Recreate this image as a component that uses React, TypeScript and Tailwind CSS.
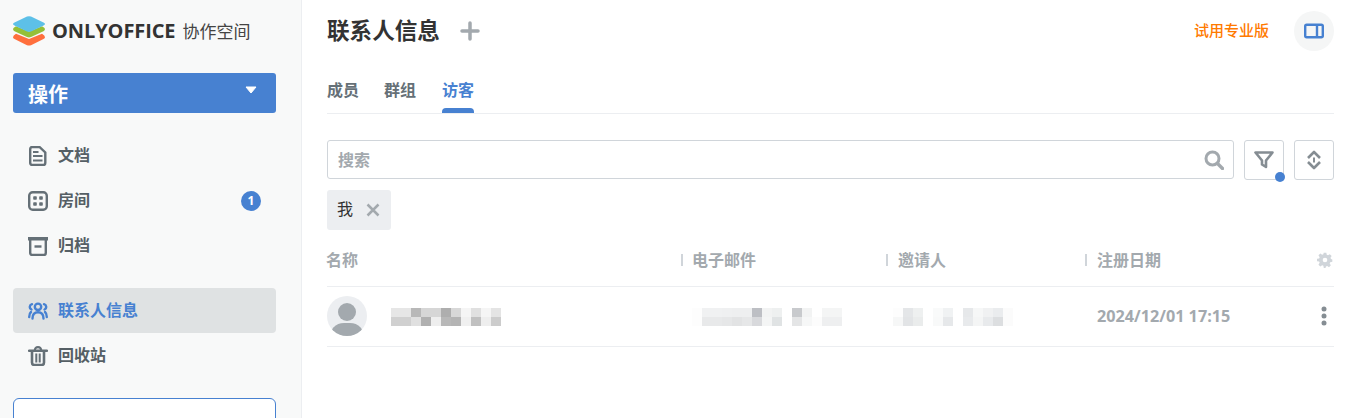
import React from 'react';

const CJK = { fontFamily: '"Open Sans", "Noto Sans CJK SC", sans-serif' };

const blurName = [
  ['#e6e6e6', '#e6e6e6', '#b8b8b8', '#d6d6d6', '#d6d6d6', '#aeaeae', '#d8d8d8', '#f5f5f5', '#e0e0e0', '#f5f5f5', '#e4e4e4'],
  ['#d0d0d0', '#d0d0d0', '#e0e0e0', '#b0b0b0', '#eeeeee', '#b8b8b8', '#b4b4b4', '#f0f0f0', '#c0c0c0', '#eeeeee', '#cccccc'],
];
const blurEmail = [
  ['#fdfdfd', '#f0f1f2', '#f0f1f2', '#eff0f1', '#eeeff0', '#eeeff0', '#bdbfc4', '#f2f3f3', '#eef0f0', '#ffffff', '#c8cacd', '#f2f3f3', '#ffffff', '#f4f5f5', '#f4f5f5'],
  ['#fdfdfd', '#e8e9ea', '#e8e9ea', '#e6e7e8', '#e2e3e4', '#e6e7e8', '#d8d9dc', '#f4f5f5', '#e0e3e4', '#ffffff', '#e4e5e6', '#f6f7f7', '#fcfcfc', '#eeeff0', '#eeeff0'],
];
const blurInviter = [
  ['#fdfdfd', '#e4e6e8', '#eef0f0', '#ffffff', '#f9fafa', '#f0f2f3', '#ffffff', '#e6e8ea', '#f6f7f7', '#f0f1f2', '#eaecee', '#fbfbfb'],
  ['#f6f7f7', '#e2e4e6', '#eaecec', '#ffffff', '#f8f9f9', '#e6e8ea', '#ffffff', '#e8eaec', '#f4f5f5', '#e8eaec', '#dcdee0', '#fbfbfb'],
];

const Blur: React.FC<{ rows: string[][] }> = ({ rows }) => (
  <div className="flex flex-col">
    {rows.map((row, i) => (
      <div key={i} className="flex h-[9px]">
        {row.map((c, j) => (
          <div key={j} className="w-[10px] h-[9px]" style={{ backgroundColor: c }} />
        ))}
      </div>
    ))}
  </div>
);

const Logo = () => (
  <svg width="32" height="30" viewBox="0 0 32 30" className="shrink-0">
    <path d="M16 21.500 L3 16.200 Q0 17.800 0 19.600 Q0 20.800 1.500 21.500 L14 27.600 Q16 28.400 18 27.600 L30.500 21.500 Q32 20.800 32 19.600 Q32 17.800 29 16.200 Z" fill="#ff6f3d" transform="translate(0 1.600)" />
    <path d="M16 15.500 L3 10.200 Q0 11.800 0 13 Q0 14.500 1.500 15.200 L14 21 Q16 21.900 18 21 L30.500 15.200 Q32 14.500 32 13 Q32 11.800 29 10.200 Z" fill="#95c038" />
    <path d="M14 .6 Q16 -.2 18 .6 L30.500 6.400 Q32 7.200 32 8 Q32 8.800 30.500 9.600 L18 15.400 Q16 16.200 14 15.400 L1.500 9.600 Q0 8.800 0 8 Q0 7.200 1.500 6.400 Z" fill="#5dc0e8" />
  </svg>
);

const DocIcon = () => (
  <svg width="20" height="20" viewBox="0 0 20 20" fill="none" stroke="#657077">
    <path d="M2.200 3a2 2 0 0 1 2-2h7.300l5.800 5.500V17a2 2 0 0 1-2 2H4.200a2 2 0 0 1-2-2Z" strokeWidth="2.400" />
    <path d="M5 6h5.500M5 10h9.500M5 14.500h9.500" strokeWidth="2.200" />
  </svg>
);

const RoomIcon = () => (
  <svg width="20" height="20" viewBox="0 0 20 20" fill="none">
    <rect x="1.200" y="1.200" width="17.600" height="17.600" rx="3.500" stroke="#657077" strokeWidth="2.400" />
    <rect x="5.200" y="5.200" width="3.600" height="3.600" rx=".8" fill="#657077" />
    <rect x="11.200" y="5.200" width="3.600" height="3.600" rx=".8" fill="#657077" />
    <rect x="5.200" y="11.200" width="3.600" height="3.600" rx=".8" fill="#657077" />
    <rect x="11.200" y="11.200" width="3.600" height="3.600" rx=".8" fill="#657077" />
  </svg>
);

const ArchiveIcon = () => (
  <svg width="20" height="20" viewBox="0 0 20 20" fill="none">
    <path d="M0 1h20v3.500H0Z" fill="#657077" />
    <path d="M2.200 4v13a2 2 0 0 0 2 2h11.600a2 2 0 0 0 2-2V4" stroke="#657077" strokeWidth="2.400" />
    <path d="M6.500 10.500h7" stroke="#657077" strokeWidth="2.400" />
  </svg>
);

const PeopleIcon = () => (
  <svg width="20" height="20" viewBox="0 0 20 20" fill="none" stroke="#4781d1" strokeWidth="2.400">
    <circle cx="10" cy="5.800" r="3.200" />
    <path d="M4.500 17.500c0-4 1.800-6.300 5.500-6.300s5.500 2.300 5.500 6.300" strokeLinecap="round" />
    <path d="M4 3.200A2.800 2.800 0 0 0 3.500 8.500M16 3.200A2.800 2.800 0 0 1 16.500 8.500M1.200 16c0-2.200.4-3.800 1.800-5M18.800 16c0-2.200-.4-3.800-1.800-5" strokeLinecap="round" />
  </svg>
);

const TrashIcon = () => (
  <svg width="20" height="20" viewBox="0 0 20 20" fill="none" stroke="#657077">
    <path d="M1 4.800h18" strokeWidth="2.400" strokeLinecap="round" />
    <path d="M6.800 4.500C6.800 2.300 8 1.200 10 1.200s3.200 1.100 3.200 3.300" strokeWidth="2.200" />
    <path d="M4 5v11.500A2.500 2.500 0 0 0 6.500 19h7a2.500 2.500 0 0 0 2.500-2.500V5" strokeWidth="2.600" />
    <path d="M8.300 7.500v9M11.700 7.500v9" strokeWidth="2" />
  </svg>
);

const NavItem: React.FC<{ icon: React.ReactNode; label: string; active?: boolean; badge?: string }> = ({ icon, label, active, badge }) => (
  <div className={`flex items-center h-[45px] px-[15px] rounded-[4px] ${active ? 'bg-[#dfe2e3]' : ''}`}>
    <div className="w-[20px] h-[20px] mr-[10px] shrink-0">{icon}</div>
    <span className={`text-[16px] font-semibold pb-[2px] ${active ? 'text-[#4781d1]' : 'text-[#555f65]'}`}>{label}</span>
    {badge && (
      <div className="ml-auto w-[20px] h-[20px] rounded-full bg-[#4781d1] text-white text-[12px] font-bold flex items-center justify-center">{badge}</div>
    )}
  </div>
);

const HeaderCell: React.FC<{ label: string; gap?: string }> = ({ label, gap = 'mr-[10px]' }) => (
  <div className="flex items-center pt-[3px]">
    <div className={`w-[2px] h-[12px] bg-[#d0d5da] ${gap}`} />
    <span>{label}</span>
  </div>
);

export default function App() {
  return (
    <div className="flex w-[1354px] h-[418px] overflow-hidden bg-white" style={CJK}>
      <aside className="w-[302px] shrink-0 h-full bg-[#f8f9f9] border-r border-[#eceef1] pl-[13px] pr-[25px] overflow-hidden">
        <div className="flex items-center h-[73px] pb-[11px]">
          <Logo />
          <span className="ml-[7px] text-[20px] leading-none font-bold text-[#333333] tracking-[-0.1px]">ONLYOFFICE</span>
          <span className="ml-[7px] text-[17px] leading-none text-[#444444]">协作空间</span>
        </div>
        <div className="flex items-center h-[40px] bg-[#4781d1] rounded-[3px] pl-[15px] pr-[19px]">
          <span className="text-[20px] font-bold text-white pt-[3px]">操作</span>
          <svg width="12" height="8" viewBox="0 0 12 8" className="ml-auto mb-[6px]">
            <path d="M1 1h10L6 7Z" fill="#ffffff" stroke="#ffffff" strokeLinejoin="round" />
          </svg>
        </div>
        <div className="mt-[20px]">
          <NavItem icon={<DocIcon />} label="文档" />
          <NavItem icon={<RoomIcon />} label="房间" badge="1" />
          <NavItem icon={<ArchiveIcon />} label="归档" />
        </div>
        <div className="mt-[20px]">
          <NavItem icon={<PeopleIcon />} label="联系人信息" active />
          <NavItem icon={<TrashIcon />} label="回收站" />
        </div>
        <div className="mt-[20px] h-[60px] bg-white border border-[#4781d1] rounded-[6px]" />
      </aside>

      <main className="flex-1 min-w-0 pl-[25px] pr-[20px]">
        <div className="flex items-center h-[61px]">
          <h1 className="text-[22.6px] font-bold text-[#333333]">联系人信息</h1>
          <svg width="20" height="20" viewBox="0 0 20 20" className="ml-[20px]">
            <path d="M10 2v16M2 10h16" stroke="#a3a9ae" strokeWidth="3.500" strokeLinecap="round" />
          </svg>
          <span className="ml-auto text-[15px] font-medium text-[#ff7a00]">试用专业版</span>
          <div className="ml-[25px] w-[40px] h-[40px] rounded-full bg-[#f5f6f6] flex items-center justify-center">
            <svg width="20" height="16" viewBox="0 0 20 16" fill="none">
              <rect x="1.200" y="1.700" width="17.600" height="12.600" rx="1.500" stroke="#4781d1" strokeWidth="2.400" />
              <path d="M13 2v12" stroke="#4781d1" strokeWidth="2.400" />
            </svg>
          </div>
        </div>

        <div className="flex gap-[25px] h-[53px] border-b border-[#eceef1] text-[16px] font-semibold text-[#657077]">
          <div className="pt-[17px]">成员</div>
          <div className="pt-[17px]">群组</div>
          <div className="relative pt-[17px] ml-[1px] text-[#4781d1]">
            访客
            <div className="absolute left-0 right-0 bottom-0 h-[5px] bg-[#4781d1] rounded-t-[4px]" />
          </div>
        </div>

        <div className="flex items-start gap-[10px] mt-[26px]">
          <div className="flex-1 h-[39px] flex items-center border border-[#d0d5da] rounded-[3px] pl-[10px] pr-[9px]">
            <span className="text-[16px] font-bold text-[#a3a9ae]">搜索</span>
            <svg width="20" height="20" viewBox="0 0 20 20" fill="none" stroke="#a3a9ae" className="ml-auto">
              <circle cx="8.500" cy="8.500" r="6.500" strokeWidth="3" />
              <path d="M13.500 13.500L18.500 18.500" strokeWidth="3.400" strokeLinecap="round" />
            </svg>
          </div>
          <div className="relative w-[40px] h-[40px] border border-[#d0d5da] rounded-[3px] flex items-center justify-center">
            <svg width="20" height="18" viewBox="0 0 20 18" fill="none">
              <path d="M1.500 1.500h17L12 9.500v6.500L8 13.500v-4Z" stroke="#858d93" strokeWidth="2.600" strokeLinejoin="round" />
            </svg>
            <div className="absolute right-[-2px] bottom-[-3px] w-[10px] h-[10px] rounded-full bg-[#4781d1]" />
          </div>
          <div className="w-[40px] h-[40px] border border-[#d0d5da] rounded-[3px] flex items-center justify-center">
            <svg width="16" height="20" viewBox="0 0 16 20" fill="none" stroke="#858d93" strokeWidth="2.600" strokeLinejoin="round">
              <path d="M2 8L8 2l6 6" />
              <path d="M2 12l6 6 6-6" />
              <path d="M8 7.500v5" strokeWidth="2" />
            </svg>
          </div>
        </div>

        <div className="flex mt-[10px]">
          <div className="flex items-center h-[40px] w-[64px] pl-[10px] bg-[#eceef1] rounded-[3px]">
            <span className="text-[16px] text-[#333333] pb-[3px]">我</span>
            <svg width="14" height="14" viewBox="0 0 14 14" className="ml-[13px]">
              <path d="M1.500 1.500l11 11M12.500 1.500l-11 11" stroke="#a3a9ae" strokeWidth="2.500" />
            </svg>
          </div>
        </div>

        <div className="grid grid-cols-[354px_205px_199px_1fr] items-center h-[57px] border-b border-[#eceef1] text-[16px] font-semibold text-[#a3a9ae]">
          <div className="-ml-[1px] pt-[3px]">名称</div>
          <HeaderCell label="电子邮件" gap="mr-[9px]" />
          <HeaderCell label="邀请人" />
          <div className="flex items-center justify-between">
            <HeaderCell label="注册日期" />
            <svg width="16" height="16" viewBox="0 0 24 24" className="mr-[1px] mt-[3px]">
              <path fillRule="evenodd" d="M10 1h4l.6 3.200 1.900.8 2.700-1.800 2.800 2.800-1.800 2.700.8 1.900L23 11.200v3.600l-3.200.6-.8 1.900 1.800 2.700-2.800 2.800-2.700-1.800-1.900.8L12.800 24h-2.600l-.6-3.200-1.900-.8-2.700 1.800-2.800-2.800 1.800-2.700-.8-1.900L0 13.800v-3.600l3.200-.6.800-1.900L2.200 5 5 2.200 7.700 4l1.900-.8ZM12 8.500a3.500 3.500 0 1 0 0 7 3.500 3.500 0 0 0 0-7Z" fill="#d0d5da" />
            </svg>
          </div>
        </div>

        <div className="grid grid-cols-[354px_205px_199px_1fr] items-center h-[60px] border-b border-[#eceef1]">
          <div className="flex items-center">
            <div className="w-[40px] h-[40px] rounded-full bg-[#eceef1] overflow-hidden flex flex-col items-center mb-[2px]">
              <div className="w-[18px] h-[18px] rounded-full bg-[#a3a9ae] mt-[7px] shrink-0" />
              <div className="w-[36px] h-[30px] rounded-full bg-[#a3a9ae] mt-[2px] shrink-0" />
            </div>
            <div className="ml-[24px]"><Blur rows={blurName} /></div>
          </div>
          <div className="pl-[11px]"><Blur rows={blurEmail} /></div>
          <div className="pl-[7px]"><Blur rows={blurInviter} /></div>
          <div className="flex items-center justify-between pl-[12px]">
            <span className="text-[16.2px] font-bold text-[#a3a9ae] pb-[1px]">2024/12/01 17:15</span>
            <svg width="6" height="20" viewBox="0 0 6 20" className="mr-[7px]">
              <circle cx="3" cy="3" r="2.500" fill="#858d93" />
              <circle cx="3" cy="10" r="2.500" fill="#858d93" />
              <circle cx="3" cy="17" r="2.500" fill="#858d93" />
            </svg>
          </div>
        </div>
      </main>
    </div>
  );
}
